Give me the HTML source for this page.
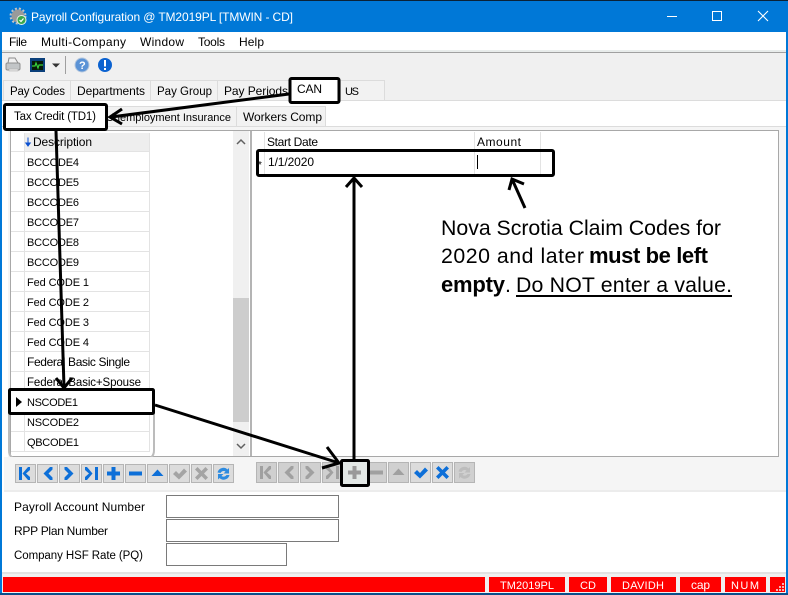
<!DOCTYPE html>
<html><head><meta charset="utf-8"><title>Payroll Configuration</title>
<style>
html,body{margin:0;padding:0;background:#fff}
svg{display:block;position:absolute;left:0;top:0}
text{font-family:"Liberation Sans",sans-serif;font-size:12px;fill:#000}
.s{font-size:11px}
.m{font-size:11.5px}
.a{font-size:21.3px}
.b{font-weight:bold;font-size:22px}
.w{fill:#fff}
.ln{stroke:#e3e3e3;stroke-width:1;fill:none}
.ar{stroke:#000;stroke-width:3;fill:none}
.bx{stroke:#000;stroke-width:3;fill:#fff}
.bt{fill:#dcdcdc;stroke:#b5b5b5}
.tab{fill:#f2f2f2;stroke:#dcdcdc}
</style></head><body>
<svg width="788" height="595" viewBox="0 0 788 595" xmlns="http://www.w3.org/2000/svg" shape-rendering="geometricPrecision">
<defs>
<g id="i0"><path d="M2 2h3v13H2zM13 2v3l-4 3.500 4 3.500v3H11L5.500 8.500 11 2z"/></g>
<g id="i1"><path d="M11 2h2.500v2.500L9.500 8.500l4 4V15H11L4.500 8.500z"/></g>
<g id="i2"><path d="M6 2H3.500v2.500l4 4-4 4V15H6l6.500-6.500z"/></g>
<g id="i3"><path d="M12 2h3v13h-3zM2 2v3l4 3.500L2 12v3h2L9.500 8.500 4 2z"/></g>
<g id="i4"><path d="M6.500 2h4v4.500H15v4h-4.500V15h-4v-4.500H2v-4h4.500z"/></g>
<g id="i5"><path d="M2 6.500h13v4H2z"/></g>
<g id="i6"><path d="M8.500 4.500l6 6.500H2.500z"/></g>
<g id="i7"><path d="M2 9l3-3 3 3 5-5.500 3 3L8 14.500z"/></g>
<g id="i8"><path d="M2 4.500l2.500-2.500L8.500 6l4-4L15 4.500l-4 4 4 4L12.500 15l-4-4-4 4L2 12.500l4-4z"/></g>
<g id="i9"><path d="M2.500 7.500a6 6 0 0 1 10-3l1.500-1.500V8.500H8.500L10.500 6.500a3.500 3.500 0 0 0-5 1.500zM14.500 10a6 6 0 0 1-10 3L3 14.500V9h5.500L6.500 11a3.500 3.500 0 0 0 5-1z"/></g>
</defs>

<!-- window -->
<rect width="788" height="595" fill="#fff"/>
<rect width="788" height="32" fill="#0078d7"/>
<rect width="788" height="1" fill="#0b2236"/>
<rect x="0" y="32" width="2" height="563" fill="#0078d7"/>
<rect x="786" y="32" width="2" height="563" fill="#0078d7"/>
<rect x="0" y="593" width="788" height="2" fill="#0b4f8a"/>

<!-- title icon -->
<circle cx="18" cy="16" r="6.500" fill="#9a9a9a"/>
<circle cx="18" cy="16" r="7.500" fill="none" stroke="#c4c4c4" stroke-width="2" stroke-dasharray="2 2"/>
<circle cx="21.500" cy="20" r="4.500" fill="#3aa84a" stroke="#e8f3e8"/>
<path d="M19.500 20l1.500 1.500 2.500-3" stroke="#fff" stroke-width="1.200" fill="none"/>
<text x="31" y="21" class="w" textLength="262" lengthAdjust="spacing">Payroll Configuration @ TM2019PL [TMWIN - CD]</text>

<!-- window controls -->
<rect x="667" y="16" width="10" height="1" fill="#fff"/>
<rect x="712.500" y="11.500" width="9" height="9" fill="none" stroke="#fff"/>
<path d="M758 11l10 10M768 11l-10 10" stroke="#fff" stroke-width="1.100"/>

<!-- menu -->
<rect x="2" y="32" width="784" height="19" fill="#fff"/>
<text x="9" y="46" textLength="18" lengthAdjust="spacing">File</text>
<text x="41" y="46" textLength="85" lengthAdjust="spacing">Multi-Company</text>
<text x="140" y="46" textLength="44" lengthAdjust="spacing">Window</text>
<text x="198" y="46" textLength="27" lengthAdjust="spacing">Tools</text>
<text x="239" y="46" textLength="25" lengthAdjust="spacing">Help</text>
<rect x="2" y="50" width="784" height="2" fill="#e8eceb"/>
<rect x="2" y="52" width="784" height="1" fill="#a0a0a0"/>

<!-- toolbar -->
<rect x="2" y="53" width="784" height="25" fill="#f0f0f0"/>
<path d="M9 58h6l3 5H8z" fill="#f0f0f0" stroke="#8c8c8c"/>
<rect x="6" y="63" width="14" height="7" rx="1.500" fill="#c2c5c7" stroke="#8f8f8f"/>
<rect x="9" y="69" width="9" height="2" fill="#e4e4e4" stroke="#a8a8a8" stroke-width=".5"/>
<rect x="30" y="58" width="15" height="14" fill="#0a3f7a"/>
<rect x="32" y="61" width="11" height="9" fill="#061a06"/>
<path d="M32 66h3l1-3 2 5 1-3h4" stroke="#37d23c" stroke-width="1.200" fill="none"/>
<path d="M52 63.500h8l-4 4z" fill="#333"/>
<rect x="65" y="56" width="1" height="18" fill="#9f9f9f"/>
<circle cx="82" cy="65" r="7" fill="#5b93d6" stroke="#b4c7dd"/>
<text x="79" y="69" class="w" style="font-size:11px;font-weight:bold">?</text>
<circle cx="105" cy="65" r="7" fill="#0b62d0"/>
<rect x="104" y="60" width="2" height="6.500" fill="#fff"/>
<rect x="104" y="68" width="2" height="2" fill="#fff"/>

<!-- upper tabs -->
<rect x="2" y="78" width="784" height="23" fill="#f0f0f0"/>
<rect x="2" y="100" width="784" height="1" fill="#dcdcdc"/>
<rect x="3.500" y="80.500" width="67" height="20" class="tab"/>
<rect x="70.500" y="80.500" width="80" height="20" class="tab"/>
<rect x="150.500" y="80.500" width="67" height="20" class="tab"/>
<rect x="217.500" y="80.500" width="72" height="20" class="tab"/>
<rect x="340.500" y="80.500" width="44" height="20" class="tab"/>
<text x="10" y="95" class="m" textLength="55" lengthAdjust="spacing">Pay Codes</text>
<text x="77" y="95" textLength="68" lengthAdjust="spacing">Departments</text>
<text x="157" y="95" class="m" textLength="55" lengthAdjust="spacing">Pay Group</text>
<text x="224" y="95" textLength="64" lengthAdjust="spacing">Pay Periods</text>
<text x="345" y="95" class="s" textLength="14" lengthAdjust="spacing">US</text>

<!-- lower tabs -->
<rect x="2" y="101" width="784" height="29" fill="#fff"/>
<rect x="103.500" y="106.500" width="133" height="20" class="tab"/>
<rect x="236.500" y="106.500" width="89" height="20" class="tab"/>
<text x="106" y="121" class="s" textLength="125" lengthAdjust="spacing">Unemployment Insurance</text>
<text x="243" y="121" textLength="79" lengthAdjust="spacing">Workers Comp</text>
<rect x="2" y="126" width="784" height="1" fill="#dcdcdc"/>

<!-- main frame -->
<rect x="8" y="127" width="778" height="333" fill="#f5f5f5"/>
<rect x="11" y="130.500" width="767.500" height="326" fill="#fff"/>
<path d="M10.500 130.500H778.500V456.500H10.500z" fill="none" stroke="#a8a8a8"/>
<rect x="250" y="131" width="2" height="325" fill="#b4b4b4"/>

<!-- left grid -->
<rect x="25" y="133" width="124" height="18" fill="#eeeeee"/>
<path class="ln" d="M11 151.500H149.500M11 171.500H149.500M11 191.500H149.500M11 211.500H149.500M11 231.500H149.500M11 251.500H149.500M11 271.500H149.500M11 291.500H149.500M11 311.500H149.500M11 331.500H149.500M11 351.500H149.500M11 371.500H149.500M11 391.500H149.500M11 411.500H149.500M11 431.500H149.500M11 451.500H149.500"/>
<path class="ln" d="M24.500 133V452M149.500 133V452"/>
<path d="M28 137.500v8M25.800 143l2.200 3 2.200-3z" stroke="#0a4fd0" fill="#0a4fd0" stroke-width="1"/>
<text x="33" y="146" textLength="59" lengthAdjust="spacing">Description</text>
<text x="27" y="166" class="s" textLength="52" lengthAdjust="spacing">BCCODE4</text>
<text x="27" y="186" class="s" textLength="52" lengthAdjust="spacing">BCCODE5</text>
<text x="27" y="206" class="s" textLength="52" lengthAdjust="spacing">BCCODE6</text>
<text x="27" y="226" class="s" textLength="52" lengthAdjust="spacing">BCCODE7</text>
<text x="27" y="246" class="s" textLength="52" lengthAdjust="spacing">BCCODE8</text>
<text x="27" y="266" class="s" textLength="52" lengthAdjust="spacing">BCCODE9</text>
<text x="27" y="286" class="s" textLength="62" lengthAdjust="spacing">Fed CODE 1</text>
<text x="27" y="306" class="s" textLength="62" lengthAdjust="spacing">Fed CODE 2</text>
<text x="27" y="326" class="s" textLength="62" lengthAdjust="spacing">Fed CODE 3</text>
<text x="27" y="346" class="s" textLength="62" lengthAdjust="spacing">Fed CODE 4</text>
<text x="27" y="366" textLength="103" lengthAdjust="spacing">Federal Basic Single</text>
<text x="27" y="386" class="m" textLength="114" lengthAdjust="spacing">Federal Basic+Spouse</text>
<text x="27" y="426" class="s" textLength="52" lengthAdjust="spacing">NSCODE2</text>
<text x="27" y="446" class="s" textLength="52" lengthAdjust="spacing">QBCODE1</text>

<!-- scrollbar -->
<rect x="233" y="131" width="16" height="325" fill="#f0f0f0"/>
<rect x="233" y="298" width="16" height="124" fill="#cdcdcd"/>
<path d="M237 144l4-4 4 4M237 444l4 4 4-4" stroke="#606060" stroke-width="1.500" fill="none"/>

<!-- grey rounded frame -->
<path d="M9 412V450q0 9 9 9H145q9 0 9-9V412" fill="none" stroke="#bcbcbc" stroke-width="2"/>

<!-- right grid -->
<path class="ln" d="M264.500 132V171M474.500 132V171M540.500 132V171M257 151.500H541M257 171.500H541"/>
<text x="267" y="146" textLength="51" lengthAdjust="spacing">Start Date</text>
<text x="477" y="146" textLength="44" lengthAdjust="spacing">Amount</text>

<!-- nav bar -->
<rect x="4" y="457" width="782" height="35" fill="#f5f5f5"/>
<g fill="#0d6fd8">
<g transform="translate(15,464)"><rect x=".5" y=".5" width="20" height="18" class="bt"/><use href="#i0" x="2" y="1"/></g>
<g transform="translate(37,464)"><rect x=".5" y=".5" width="20" height="18" class="bt"/><use href="#i1" x="2" y="1"/></g>
<g transform="translate(59,464)"><rect x=".5" y=".5" width="20" height="18" class="bt"/><use href="#i2" x="2" y="1"/></g>
<g transform="translate(81,464)"><rect x=".5" y=".5" width="20" height="18" class="bt"/><use href="#i3" x="2" y="1"/></g>
<g transform="translate(103,464)"><rect x=".5" y=".5" width="20" height="18" class="bt"/><use href="#i4" x="2" y="1"/></g>
<g transform="translate(125,464)"><rect x=".5" y=".5" width="20" height="18" class="bt"/><use href="#i5" x="2" y="1"/></g>
<g transform="translate(147,464)"><rect x=".5" y=".5" width="20" height="18" class="bt"/><use href="#i6" x="2" y="1"/></g>
<g transform="translate(169,464)" fill="#a4a4a4"><rect x=".5" y=".5" width="20" height="18" class="bt"/><use href="#i7" x="2" y="1"/></g>
<g transform="translate(191,464)" fill="#a4a4a4"><rect x=".5" y=".5" width="20" height="18" class="bt"/><use href="#i8" x="2" y="1"/></g>
<g transform="translate(213,464)" fill="#2d8be0"><rect x=".5" y=".5" width="20" height="18" class="bt"/><use href="#i9" x="2" y="1"/></g>
</g>
<g fill="#a0a0a0">
<g transform="translate(256,462)"><rect x=".5" y=".5" width="20" height="20" class="bt" style="fill:#d0d0d0"/><use href="#i0" x="2" y="2"/></g>
<g transform="translate(278,462)"><rect x=".5" y=".5" width="20" height="20" class="bt" style="fill:#d0d0d0"/><use href="#i1" x="2" y="2"/></g>
<g transform="translate(300,462)"><rect x=".5" y=".5" width="20" height="20" class="bt" style="fill:#d0d0d0"/><use href="#i2" x="2" y="2"/></g>
<g transform="translate(322,462)"><rect x=".5" y=".5" width="20" height="20" class="bt" style="fill:#d0d0d0"/><use href="#i3" x="2" y="2"/></g>
<g transform="translate(366,462)"><rect x=".5" y=".5" width="20" height="20" class="bt" style="fill:#d0d0d0"/><use href="#i5" x="2" y="2"/></g>
<g transform="translate(388,462)"><rect x=".5" y=".5" width="20" height="20" class="bt" style="fill:#d0d0d0"/><use href="#i6" x="2" y="2"/></g>
<g transform="translate(410,462)" fill="#0d6fd8"><rect x=".5" y=".5" width="20" height="20" class="bt"/><use href="#i7" x="2" y="2"/></g>
<g transform="translate(432,462)" fill="#0d6fd8"><rect x=".5" y=".5" width="20" height="20" class="bt"/><use href="#i8" x="2" y="2"/></g>
<g transform="translate(454,462)" fill="#bdbdbd"><rect x=".5" y=".5" width="20" height="20" class="bt" style="fill:#d0d0d0"/><use href="#i9" x="2" y="2"/></g>
</g>
<rect x="4" y="490" width="782" height="2" fill="#ececec"/>

<!-- form -->
<text x="14" y="511" textLength="131" lengthAdjust="spacing">Payroll Account Number</text>
<text x="14" y="535" textLength="94" lengthAdjust="spacing">RPP Plan Number</text>
<text x="14" y="559" class="m" textLength="129" lengthAdjust="spacing">Company HSF Rate (PQ)</text>
<rect x="166.500" y="495.500" width="172" height="22" fill="#fff" stroke="#7a7a7a"/>
<rect x="166.500" y="519.500" width="172" height="22" fill="#fff" stroke="#7a7a7a"/>
<rect x="166.500" y="543.500" width="120" height="22" fill="#fff" stroke="#7a7a7a"/>

<!-- status bar -->
<rect x="2" y="572" width="784" height="21" fill="#f0f0f0"/>
<rect x="2" y="572" width="784" height="2" fill="#e2e2e2"/>
<g fill="#ff0000">
<rect x="3" y="577" width="482" height="15"/>
<rect x="489" y="577" width="76" height="15"/>
<rect x="569" y="577" width="38" height="15"/>
<rect x="611" y="577" width="65" height="15"/>
<rect x="680" y="577" width="41" height="15"/>
<rect x="725" y="577" width="41" height="15"/>
<rect x="770" y="577" width="15" height="15"/>
</g>
<text x="500" y="589" class="s w" textLength="54" lengthAdjust="spacing">TM2019PL</text>
<text x="580" y="589" class="s w" textLength="16" lengthAdjust="spacing">CD</text>
<text x="622" y="589" class="s w" textLength="42" lengthAdjust="spacing">DAVIDH</text>
<text x="691" y="589" class="w" textLength="19" lengthAdjust="spacing">cap</text>
<text x="731" y="589" class="s w" textLength="28" lengthAdjust="spacing">NUM</text>
<path d="M782 583h2v2h-2zM779 586h2v2h-2zM782 586h2v2h-2zM776 589h2v2h-2zM779 589h2v2h-2zM782 589h2v2h-2z" fill="#f4b4b4"/>

<!-- annotation boxes -->
<rect x="290" y="78.500" width="49" height="24" rx="1.500" class="bx"/>
<text x="297" y="93" textLength="25" lengthAdjust="spacing">CAN</text>
<rect x="4.500" y="104.500" width="102" height="25" rx="1.500" class="bx"/>
<text x="14" y="120" class="m" textLength="82" lengthAdjust="spacing">Tax Credit (TD1)</text>

<!-- arrows -->
<path class="ar" d="M289 94L111 117M122 109L110 117L122 124"/>
<path class="ar" d="M56 131L64 387M56 378L64 388L72 378"/>
<path class="ar" d="M155 405L339 463M327 447L339 463L322 468"/>
<path class="ar" d="M354 459V179M346 187L354 178L362 187"/>
<path class="ar" d="M525 208L512 179M509 190L512 179L524 184"/>

<!-- NSCODE row box -->
<rect x="9.500" y="389.500" width="144" height="24" rx="1" class="bx"/>
<path d="M16 397l6 5-6 5z" fill="#000"/>
<text x="27" y="406" class="s" textLength="51" lengthAdjust="spacing">NSCODE1</text>

<!-- date box -->
<rect x="257.500" y="150.500" width="296" height="25" rx="1.500" fill="#fff" stroke="#000" stroke-width="3"/>
<path class="ln" d="M264.500 152V174M474.500 152V174M540.500 152V174"/>
<text x="258" y="168" style="font-size:10px">*</text>
<text x="268" y="166" textLength="46" lengthAdjust="spacing">1/1/2020</text>
<rect x="477" y="155" width="1" height="14" fill="#000"/>

<!-- plus box -->
<rect x="341.500" y="460.500" width="27" height="25" rx="1" fill="#e3e8e6" stroke="#000" stroke-width="3"/>
<g fill="#9a9a9a"><use href="#i4" x="346" y="464"/></g>

<!-- annotation text -->
<text x="441" y="235" class="a" textLength="280" lengthAdjust="spacing">Nova Scrotia Claim Codes for</text>
<text x="441" y="263" class="a" textLength="143" lengthAdjust="spacing">2020 and later</text>
<text x="589" y="263" class="b" textLength="119" lengthAdjust="spacing">must be left</text>
<text x="441" y="292" class="b" textLength="64" lengthAdjust="spacing">empty</text>
<text x="505" y="292" class="a">.</text>
<text x="516" y="292" class="a" textLength="216" lengthAdjust="spacing">Do NOT enter a value.</text>
<rect x="516" y="295" width="216" height="2" fill="#000"/>
</svg>
</body></html>
